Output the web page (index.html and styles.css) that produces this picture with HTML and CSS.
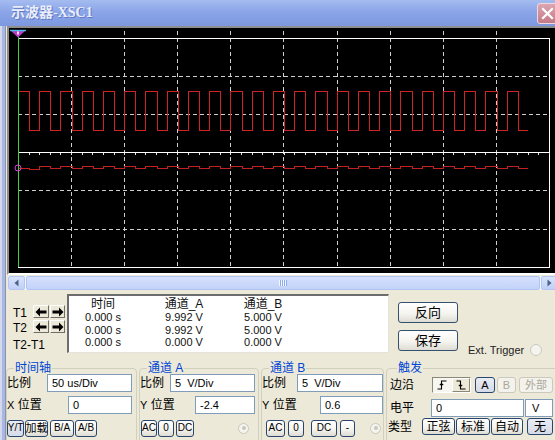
FILE: index.html
```html
<!DOCTYPE html>
<html lang="zh-CN">
<head>
<meta charset="utf-8">
<title>示波器-XSC1</title>
<link rel="stylesheet" href="styles.css">
</head>
<body>
<div class="window">
  <div class="titlebar">
    <span class="title">示波器-XSC1</span>
    <span class="close"><svg width="13" height="13" viewBox="0 0 13 13"><path d="M2 2L11 11M11 2L2 11" stroke="#fff" stroke-width="2.2" stroke-linecap="square"/></svg></span>
  </div>
  <div class="client">
    <div class="frame-left"></div>
    <div class="content">
      <div class="screen">
        <svg width="546" height="245" viewBox="9 28 546 245">
          <g shape-rendering="crispEdges" fill="none">
            <path d="M71.5 31V267M124.5 31V267M177.5 31V267M230.5 31V267M283.5 31V267M337.5 31V267M390.5 31V267M443.5 31V267M496.5 31V267" stroke="#cfcfcf" stroke-dasharray="4 3"/>
            <path d="M18 76.5H549M18 114.5H549M18 190.5H549M18 229.5H549" stroke="#cfcfcf" stroke-dasharray="4 3"/>
            <path d="M18 38.5H549.5V267.5H18" stroke="#ffffff"/>
            <path d="M18 152.5H549.5" stroke="#ffffff"/>
            <path d="M18 154H549.5" stroke="#e8e8e8" stroke-width="2" stroke-dasharray="1 9.62"/>
            <path d="M19 91.5H29.5V130.5
              h10V91.5h11.25V130.5 h10V91.5h11.25V130.5 h10V91.5h11.25V130.5 h10V91.5h11.25V130.5 h10V91.5h11.25V130.5
              h10V91.5h11.25V130.5 h10V91.5h11.25V130.5 h10V91.5h11.25V130.5 h10V91.5h11.25V130.5 h10V91.5h11.25V130.5
              h10V91.5h11.25V130.5 h10V91.5h11.25V130.5 h10V91.5h11.25V130.5 h10V91.5h11.25V130.5 h10V91.5h11.25V130.5
              h10V91.5h11.25V130.5 h10V91.5h11.25V130.5 h10V91.5h11.25V130.5 h10V91.5h11.25V130.5 h10V91.5h11.25V130.5
              h10V91.5h11.25V130.5 h10V91.5h11.25V130.5 h10V91.5h11.25V130.5
              h10" stroke="#d02424"/>
            <path d="M19 168.5H29.5V169.5h10V166.5h11.25V168.5
              h10V166.5h11.25V168.5 h10V166.5h11.25V168.5 h10V166.5h11.25V168.5 h10V166.5h11.25V168.5 h10V166.5h11.25V168.5
              h10V166.5h11.25V168.5 h10V166.5h11.25V168.5 h10V166.5h11.25V168.5 h10V166.5h11.25V168.5 h10V166.5h11.25V168.5
              h10V166.5h11.25V168.5 h10V166.5h11.25V168.5 h10V166.5h11.25V168.5 h10V166.5h11.25V168.5 h10V166.5h11.25V168.5
              h10V166.5h11.25V168.5 h10V166.5h11.25V168.5 h10V166.5h11.25V168.5 h10V166.5h11.25V168.5 h10V166.5h11.25V168.5
              h10V166.5h11.25V168.5 h10V166.5h11.25V168.5
              h10" stroke="#c42020"/>
            <path d="M18.5 36V267" stroke="#36d636"/>
          </g>
          <circle cx="18" cy="168" r="3" fill="none" stroke="#e040e0"/>
          <polygon points="10,30 26,30 18,37.5" fill="#b83cc4"/>
          <path d="M10 30.5H26" stroke="#44c4ee" stroke-width="1.4"/>
          <rect x="17" y="31.5" width="2" height="3" fill="#f2dcf2"/>
        </svg>
      </div>
      <div class="hscroll">
        <span class="sb-btn"><svg width="5" height="8" viewBox="0 0 5 8"><path d="M4.5 0.5V7.5L0.5 4Z" fill="#4d6185"/></svg></span>
        <span class="sb-thumb"><span class="grip"></span></span>
        <span class="sb-btn"><svg width="5" height="8" viewBox="0 0 5 8"><path d="M0.5 0.5V7.5L4.5 4Z" fill="#4d6185"/></svg></span>
      </div>
      <div class="readout">
        <div class="cursors">
          <span class="tlabel">T1</span>
          <span class="arrow"><svg width="12" height="10" viewBox="0 0 12 10"><path d="M0.5 5L5 0.5V3.5H11.5V6.5H5V9.5Z" fill="#000"/></svg></span>
          <span class="arrow"><svg width="12" height="10" viewBox="0 0 12 10"><path d="M11.5 5L7 0.5V3.5H0.5V6.5H7V9.5Z" fill="#000"/></svg></span>
          <span class="tlabel">T2</span>
          <span class="arrow"><svg width="12" height="10" viewBox="0 0 12 10"><path d="M0.5 5L5 0.5V3.5H11.5V6.5H5V9.5Z" fill="#000"/></svg></span>
          <span class="arrow"><svg width="12" height="10" viewBox="0 0 12 10"><path d="M11.5 5L7 0.5V3.5H0.5V6.5H7V9.5Z" fill="#000"/></svg></span>
          <span class="tdiff">T2-T1</span>
        </div>
        <div class="databox">
          <span class="hd">时间</span><span class="hd">通道_A</span><span class="hd">通道_B</span>
          <span>0.000 s</span><span>9.992 V</span><span>5.000 V</span>
          <span>0.000 s</span><span>9.992 V</span><span>5.000 V</span>
          <span>0.000 s</span><span>0.000 V</span><span>0.000 V</span>
        </div>
        <div class="actions">
          <span class="xbtn big">反向</span>
          <span class="xbtn big">保存</span>
        </div>
        <div class="ext">Ext. Trigger <span class="radio ext-radio"></span></div>
      </div>
      <div class="groups">
        <fieldset class="grp g-time">
          <legend>时间轴</legend>
          <div class="row">
            <span class="lbl">比例</span>
            <span class="field w85">50 us/Div</span>
          </div>
          <div class="row r2">
            <span class="lbl"><span class="lat">X</span> 位置</span>
            <span class="field w64">0</span>
          </div>
          <div class="row r3 start">
            <span class="xbtn tiny on w17">Y/T</span>
            <span class="xbtn w23 ml1">加载</span>
            <span class="xbtn tiny w24 ml2">B/A</span>
            <span class="xbtn tiny w22 ml1">A/B</span>
          </div>
        </fieldset>
        <fieldset class="grp g-a">
          <legend>通道 A</legend>
          <div class="row">
            <span class="lbl">比例</span>
            <span class="field w85">5&nbsp; V/Div</span>
          </div>
          <div class="row r2">
            <span class="lbl"><span class="lat">Y</span> 位置</span>
            <span class="field w60">-2.4</span>
          </div>
          <div class="row r3 start">
            <span class="xbtn tiny w16 ml1">AC</span>
            <span class="xbtn tiny w16 ml1">0</span>
            <span class="xbtn tiny w18 ml2">DC</span>
            <span class="radio dot r-a"></span>
          </div>
        </fieldset>
        <fieldset class="grp g-b">
          <legend>通道 B</legend>
          <div class="row">
            <span class="lbl">比例</span>
            <span class="field w86">5&nbsp; V/Div</span>
          </div>
          <div class="row r2">
            <span class="lbl"><span class="lat">Y</span> 位置</span>
            <span class="field w63">0.6</span>
          </div>
          <div class="row r3 start">
            <span class="xbtn tiny w19 ml4">AC</span>
            <span class="xbtn tiny w16 ml3">0</span>
            <span class="xbtn tiny w26 ml7">DC</span>
            <span class="xbtn tiny w15 ml3">-</span>
            <span class="radio dot r-b"></span>
          </div>
        </fieldset>
        <fieldset class="grp g-trig">
          <legend>触发</legend>
          <div class="row start t1">
            <span class="lbl lw42">边沿</span>
            <span class="edge">
              <span class="edge-down"><svg width="11" height="10" viewBox="0 0 11 10"><path d="M0.5 9H4.5V1H9.5M2.8 5.2L4.5 3.5L6.2 5.2" fill="none" stroke="#000" stroke-width="1.1"/></svg></span>
              <span class="edge-up"><svg width="11" height="10" viewBox="0 0 11 10"><path d="M0.5 1H4.5V9H9.5M2.8 4.8L4.5 6.5L6.2 4.8" fill="none" stroke="#000" stroke-width="1.1"/></svg></span>
            </span>
            <span class="xbtn on sm w20 ml4">A</span>
            <span class="xbtn off sm w19 ml2">B</span>
            <span class="xbtn off sm w34 ml3">外部</span>
          </div>
          <div class="row start t2">
            <span class="lbl lw41">电平</span>
            <span class="field w93">0</span>
            <span class="field unit">V</span>
          </div>
          <div class="row start t3">
            <span class="lbl lw34 mlm2">类型</span>
            <span class="xbtn cjk w33">正弦</span>
            <span class="xbtn cjk w34 ml1">标准</span>
            <span class="xbtn cjk w32 ml1">自动</span>
            <span class="xbtn cjk on w26 ml4">无</span>
          </div>
        </fieldset>
      </div>
    </div>
  </div>
</div>
</body>
</html>
```

FILE: styles.css
```css
* { box-sizing: border-box; }
html, body { margin: 0; padding: 0; }
body {
  width: 555px;
  height: 440px;
  overflow: hidden;
  background: #ece9d8;
  font-family: "Liberation Sans", "Noto Sans CJK SC", sans-serif;
  font-size: 11px;
  color: #000;
}
.window {
  width: 555px;
  height: 440px;
  display: flex;
  flex-direction: column;
  overflow: hidden;
}
.titlebar {
  height: 26px;
  flex: none;
  display: flex;
  justify-content: space-between;
  align-items: flex-start;
  background: linear-gradient(#a5bcf0, #8ba5e8 45%, #7e98e0);
}
.title {
  margin: 5px 0 0 11px;
  font: bold 14px/16px "Liberation Serif", "Noto Sans CJK SC", serif;
  color: #e9eefa;
  text-shadow: 1px 1px 0 #6178c4;
}
.close {
  width: 21px;
  height: 21px;
  margin: 3px -3px 0 0;
  border: 1px solid #efd9de;
  border-radius: 3px;
  background: linear-gradient(#dca6b0, #c47a88);
  display: flex;
  align-items: center;
  justify-content: center;
}
.close svg { display: block; }
.client { flex: 1; display: flex; min-height: 0; }
.frame-left {
  width: 6px;
  flex: none;
  background: linear-gradient(to right, #d5daea 0, #d5daea 2px, #a8b6e8 2px, #a8b6e8 5px, #8f93a6 5px, #8f93a6 6px);
}
.content {
  flex: 1;
  min-width: 0;
  display: flex;
  flex-direction: column;
  background: #ece9d8;
  overflow: hidden;
}
.screen {
  margin-left: 1px;
  height: 249px;
  flex: none;
  border-top: 2px solid #8e8e8e;
  border-left: 2px solid #8e8e8e;
  border-bottom: 2px solid #ffffff;
  background: #000;
  overflow: hidden;
}
.screen svg { display: block; }

/* scrollbar */
.hscroll {
  display: flex;
  flex: none;
  width: 550px;
  height: 14px;
  margin: 1px 0 0 2px;
  background: #f3f5fc;
}
.sb-btn {
  width: 17px;
  flex: none;
  border: 1px solid #b4c6f2;
  border-radius: 2px;
  background: linear-gradient(#d8e3fc, #c0d0f8);
  display: flex;
  align-items: center;
  justify-content: center;
}
.sb-btn svg { display: block; }
.sb-thumb {
  flex: 1;
  margin: 0 1px;
  border: 1px solid #b0c4f3;
  border-radius: 2px;
  background: linear-gradient(#d5e0fc, #c3d2f9);
  display: flex;
  align-items: center;
  justify-content: center;
}
.grip {
  width: 8px;
  height: 6px;
  background: repeating-linear-gradient(to right, #f6f8ff 0, #f6f8ff 1px, #8caaf0 1px, #8caaf0 2px);
}

/* readout */
.readout { height: 69px; flex: none; display: flex; align-items: flex-start; }
.cursors {
  width: 61px;
  flex: none;
  padding: 15px 0 0 7px;
  display: grid;
  grid-template-columns: 19px 16px 15px;
  grid-template-rows: 13px 13px auto;
  column-gap: 1px;
  row-gap: 2px;
}
.tlabel { font-size: 12px; line-height: 13px; padding-top: 2px; }
.tdiff { grid-column: 1 / 4; margin-top: 4px; font-size: 12px; line-height: 12px; }
.arrow {
  height: 13px;
  border: 1px solid;
  border-color: #ffffff #716f64 #716f64 #ffffff;
  background: #ece9d8;
  display: flex;
  align-items: center;
  justify-content: center;
}
.arrow svg { display: block; }
.databox {
  width: 322px;
  height: 59px;
  margin-top: 4px;
  flex: none;
  background: #fff;
  border-style: solid;
  border-width: 2px 1px 1px 2px;
  border-color: #6d6d6d #e6e4da #e6e4da #6d6d6d;
  padding-top: 2px;
  display: grid;
  grid-template-columns: 68px 94px 64px;
  grid-template-rows: 13px;
  grid-auto-rows: 12.5px;
  line-height: 12.5px;
  text-align: center;
  font-size: 11px;
  color: #111;
}
.databox .hd { font-size: 12px; line-height: 13px; }
.actions {
  margin: 12px 0 0 9px;
  width: 60px;
  flex: none;
  display: flex;
  flex-direction: column;
  gap: 7px;
}
.ext {
  margin: 54px 0 0 10px;
  display: flex;
  align-items: center;
  gap: 6px;
  line-height: 12px;
  font-size: 11px;
  color: #222;
  white-space: nowrap;
}

/* buttons */
.xbtn {
  display: flex;
  align-items: center;
  justify-content: center;
  flex: none;
  height: 17px;
  padding: 0;
  border: 1px solid #2a466e;
  border-radius: 3px;
  background: linear-gradient(#ffffff, #f5f4ef 55%, #dedcd2);
  font-size: 11px;
  line-height: 1;
  color: #000;
  white-space: nowrap;
}
.xbtn.tiny { font-size: 10px; }
.xbtn.big { height: 21px; font-size: 13px; border-color: #36506f; }
.xbtn.cjk { font-size: 12px; }
.xbtn.sm { height: 16px; }
.xbtn.on { background: linear-gradient(#e8ecf4, #d5dbe8); }
.xbtn.off { border-color: #cbc9bc; color: #aca899; background: #f3f2ec; }

.radio {
  width: 11px;
  height: 11px;
  border-radius: 50%;
  border: 1px solid #cac8bb;
  background: #f5f4ef;
  display: flex;
  align-items: center;
  justify-content: center;
  flex: none;
}
.radio.dot::after {
  content: "";
  width: 4px;
  height: 4px;
  border-radius: 50%;
  background: #c9c7ba;
}
.ext-radio { width: 12px; height: 12px; }

/* groups */
.groups { display: flex; gap: 2px; flex: none; margin-top: 3px; }
.grp {
  margin: 0;
  padding: 0;
  border: 1px solid #d0d0bf;
  border-radius: 4px;
  height: 90px;
  min-width: 0;
  flex: none;
}
.grp legend {
  padding: 0 1px;
  margin-left: 7px;
  color: #0046d5;
  font-size: 12px;
  line-height: 12px;
}
.g-time { width: 131px; padding-right: 4px; }
.g-a { width: 120px; padding-right: 3px; }
.g-b { width: 123px; padding-right: 0; }
.g-trig { width: 176px; padding: 2px 0 0 3px; }

.row { display: flex; align-items: center; justify-content: space-between; height: 18px; }
.row.start { justify-content: flex-start; }
.row.r2 { margin-top: 4px; }
.row.r3 { margin-top: 5px; }
.row.t2 { margin-top: 5px; }
.row.t3 { margin-top: 1px; height: 17px; }
.lbl { font-size: 12px; line-height: 18px; white-space: nowrap; flex: none; }
.lat { font-size: 11px; }
.field {
  height: 18px;
  flex: none;
  border: 1px solid #7f9db9;
  background: #fff;
  padding-left: 4px;
  display: flex;
  align-items: center;
  font-size: 11px;
  white-space: nowrap;
}
.field.unit { width: 28px; margin-left: 1px; padding-left: 6px; }

.edge {
  display: flex;
  height: 16px;
  width: 39px;
  flex: none;
  border: 1px solid;
  border-color: #8a8878 #ffffff #ffffff #8a8878;
}
.edge-down {
  width: 19px;
  background: #f7f6f1;
  display: flex;
  align-items: center;
  justify-content: center;
}
.edge-up {
  flex: 1;
  background: #ece9d8;
  border: 1px solid;
  border-color: #ffffff #8a8878 #8a8878 #ffffff;
  display: flex;
  align-items: center;
  justify-content: center;
}
.edge svg { display: block; }

.r-a { margin-left: auto; margin-right: 6px; }
.r-b { margin-left: auto; margin-right: 2px; }

.w15 { width: 15px; } .w16 { width: 16px; } .w17 { width: 17px; } .w18 { width: 18px; }
.w19 { width: 19px; } .w20 { width: 20px; } .w22 { width: 22px; } .w23 { width: 23px; }
.w24 { width: 24px; } .w26 { width: 26px; } .w32 { width: 32px; } .w33 { width: 33px; }
.w34 { width: 34px; } .w60 { width: 60px; } .w63 { width: 63px; } .w64 { width: 64px; }
.w85 { width: 85px; } .w86 { width: 86px; } .w93 { width: 93px; }
.ml1 { margin-left: 1px; } .ml2 { margin-left: 2px; } .ml3 { margin-left: 3px; }
.ml4 { margin-left: 4px; } .ml7 { margin-left: 7px; }
.lw34 { width: 34px; } .lw41 { width: 41px; } .lw42 { width: 42px; }
.mlm2 { margin-left: -2px; }
```
